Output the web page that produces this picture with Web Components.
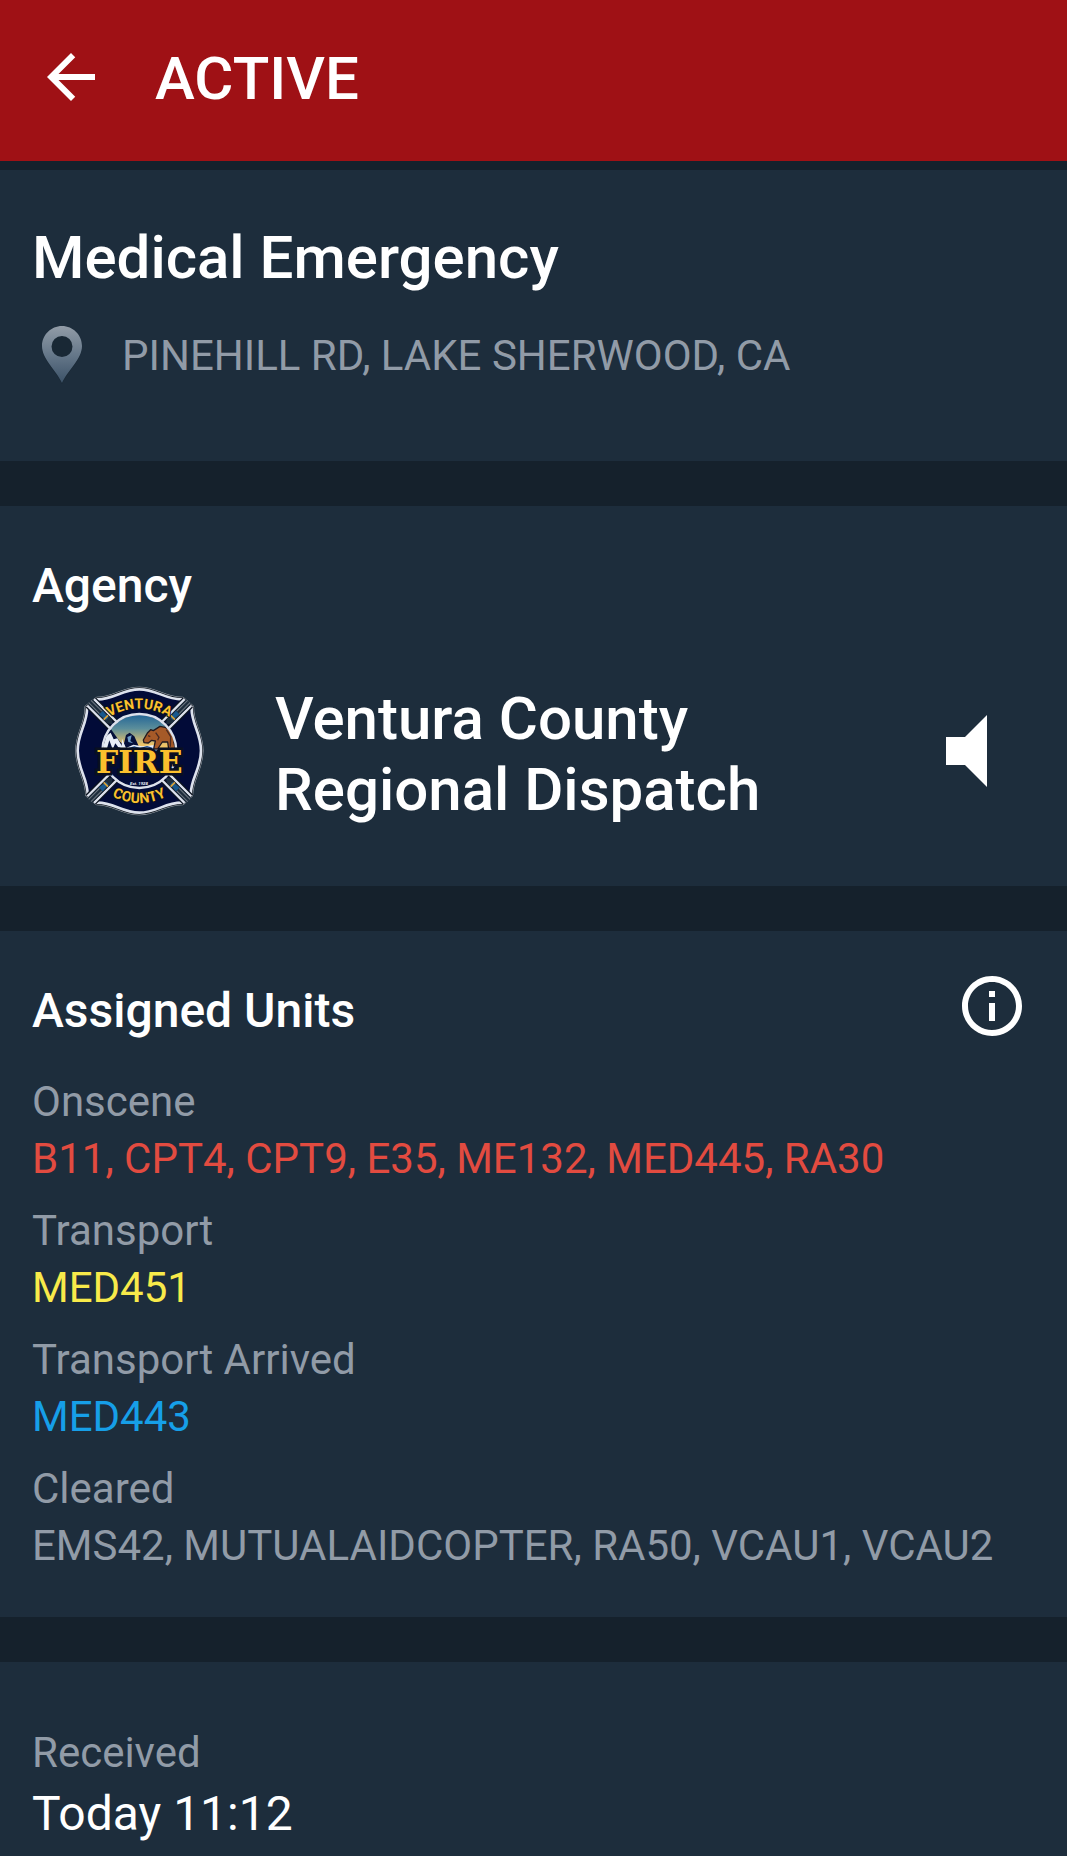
<!DOCTYPE html>
<html lang="en">
<head>
<meta charset="utf-8">
<meta name="viewport" content="width=device-width, initial-scale=1">
<title>Active incident</title>
<style>
  :root {
    --bar: #9f1115;
    --card: #1d2d3c;
    --gap: #15212c;
    --text: #fff;
    --muted: #919ba7;
  }

  body {
    margin: 0;
    background: var(--gap);
    color: var(--text);
    font-family: Roboto, "Liberation Sans", sans-serif;
  }
</style>
</head>
<body>

<incident-page>
  <app-bar slot="bar">ACTIVE</app-bar>

  <info-card>
    <card-title large>Medical Emergency</card-title>
    <incident-address>PINEHILL RD, LAKE SHERWOOD, CA</incident-address>
  </info-card>

  <info-card>
    <card-title>Agency</card-title>
    <agency-row>
      <agency-badge slot="badge"></agency-badge>
      Ventura County Regional Dispatch
    </agency-row>
  </info-card>

  <info-card>
    <card-title info>Assigned Units</card-title>
    <unit-list>
      <unit-group label="Onscene" status="onscene">B11, CPT4, CPT9, E35, ME132, MED445, RA30</unit-group>
      <unit-group label="Transport" status="transport">MED451</unit-group>
      <unit-group label="Transport Arrived" status="arrived">MED443</unit-group>
      <unit-group label="Cleared" status="cleared">EMS42, MUTUALAIDCOPTER, RA50, VCAU1, VCAU2</unit-group>
    </unit-list>
  </info-card>

  <info-card last>
    <unit-group label="Received" status="time">Today 11:12</unit-group>
  </info-card>
</incident-page>

<script>
// every element below only differs in its markup, so the shadow root is set up once
class BaseElement extends HTMLElement {
  constructor() {
    super();
    this.attachShadow({ mode: 'open' }).innerHTML = this.constructor.markup;
  }
}

// page: app bar on top, cards under it
customElements.define('incident-page', class extends BaseElement {
  static markup = `
    <style>
      :host { display: flex; flex-direction: column; min-height: 100vh; }
      main { flex: 1; display: flex; flex-direction: column; gap: 45px; padding-top: 9px; }
    </style>
    <slot name="bar"></slot>
    <main><slot></slot></main>
  `;
});

customElements.define('app-bar', class extends BaseElement {
  static markup = `
    <style>
      :host { display: block; background: var(--bar); }
      header { display: flex; align-items: flex-end; gap: 48px; padding: 41px 35px 48px; }
      button { display: block; padding: 0; border: 0; background: none; color: inherit; }
      svg { display: block; width: 72px; height: 72px; }
      h1 { margin: 0; font-size: 60px; font-weight: 500; line-height: 68px; }
    </style>
    <header>
      <button type="button" aria-label="Back">
        <svg viewBox="0 0 24 24" fill="currentColor"><path d="M20 11H7.83l5.59-5.59L12 4l-8 8 8 8 1.41-1.41L7.83 13H20v-2z"/></svg>
      </button>
      <h1><slot></slot></h1>
    </header>
  `;
});

customElements.define('info-card', class extends BaseElement {
  static markup = `
    <style>
      :host { display: block; padding: 52px 39px 43px 32px; background: var(--card); }
      :host([last]) { flex: 1; padding-top: 62px; padding-bottom: 0; }
    </style>
    <slot></slot>
  `;
});

customElements.define('card-title', class extends BaseElement {
  static markup = `
    <style>
      :host { display: flex; justify-content: space-between; }
      h2 { margin: 0; font-size: 48px; font-weight: 500; line-height: 56px; }
      :host([large]) h2 { font-size: 60px; line-height: 72px; }
      /* the tap area is taller than the title line */
      button { display: none; margin: -13px 0 -3px; padding: 0; border: 0; background: none; color: inherit; }
      :host([info]) button { display: block; }
      svg { display: block; width: 72px; height: 72px; }
    </style>
    <h2><slot></slot></h2>
    <button type="button" aria-label="Unit status info">
      <svg viewBox="0 0 24 24" fill="currentColor"><path d="M11 7h2v2h-2zm0 4h2v6h-2zm1-9C6.48 2 2 6.48 2 12s4.48 10 10 10 10-4.48 10-10S17.52 2 12 2zm0 18c-4.41 0-8-3.59-8-8s3.59-8 8-8 8 3.59 8 8-3.59 8-8 8z"/></svg>
    </button>
  `;
});

customElements.define('incident-address', class extends BaseElement {
  static markup = `
    <style>
      :host { display: flex; align-items: center; gap: 30px; padding: 32px 0; color: var(--muted); font-size: 42px; line-height: 50px; }
      svg { flex: none; width: 60px; height: 60px; }
    </style>
    <svg viewBox="0 0 60 60" aria-hidden="true">
      <defs>
        <linearGradient id="pin" x1="0" y1="0" x2="0" y2="1">
          <stop offset="0" stop-color="#929ca7"/>
          <stop offset=".5" stop-color="#66788a"/>
          <stop offset="1" stop-color="#3c5268"/>
        </linearGradient>
      </defs>
      <path d="M30 2C19 2 10 10 10 21c0 13 14 24 20 37 6-13 20-24 20-37C50 10 41 2 30 2z" fill="#172431" opacity=".6"/>
      <path fill="url(#pin)" fill-rule="evenodd" d="M30 0C19 0 10 9 10 20c0 13 14 24 20 37 6-13 20-24 20-37C50 9 41 0 30 0zm0 10a10.500 10.500 0 1 1 0 21 10.500 10.500 0 0 1 0-21z"/>
    </svg>
    <span><slot></slot></span>
  `;
});

customElements.define('agency-row', class extends BaseElement {
  static markup = `
    <style>
      :host { display: flex; align-items: flex-start; gap: 68px; padding: 69px 0 18px 39px; }
      .name { flex: 1; margin-right: -68px; font-size: 60px; font-weight: 500; line-height: 71px; }
      button { display: grid; place-items: center; width: 124px; height: 136px; padding: 0; border: 0; background: none; color: inherit; }
      svg { width: 41px; height: 72px; }
    </style>
    <slot name="badge"></slot>
    <div class="name"><slot></slot></div>
    <button type="button" aria-label="Listen">
      <svg viewBox="0 0 41 72" fill="currentColor"><path d="M0 22h19L41 0v72L19 50H0z"/></svg>
    </button>
  `;
});

// fire department cross
customElements.define('agency-badge', class extends BaseElement {
  static markup = `
    <style>
      :host { display: block; flex: none; }
      svg { display: block; width: 136px; height: 136px; }
      text { font-family: "Liberation Sans Narrow", Roboto, sans-serif; font-weight: 700; fill: #fbc02d; stroke: #0a1020; paint-order: stroke; text-anchor: middle; }
      .fire { font-family: "DejaVu Serif", serif; }
      .est { fill: #e9edf5; stroke: none; }
    </style>
    <svg viewBox="32 41 408 408" role="img" aria-label="Ventura County Fire">
      <defs>
        <linearGradient id="sky" x1="0" y1="0" x2="0" y2="1">
          <stop offset="0" stop-color="#1f6296"/>
          <stop offset=".2" stop-color="#5b8e9b"/>
          <stop offset=".42" stop-color="#efc467"/>
        </linearGradient>
        <clipPath id="disc"><circle cx="237" cy="245" r="108"/></clipPath>
        <path id="cross" d="M110 90C160 91 185 60 237 60S314 91 366 90L394 114C391 160 422 190 422 244S391 328 391 376L366 400C314 399 289 430 237 430S160 399 110 400L82 376C82 328 52 298 52 244S83 160 80 114Z"/>
        <path id="top" d="M140 147Q237 88 334 147"/>
        <path id="bottom" d="M135 370Q237 432 339 370"/>
        <!-- slot between two arms, with the hose nozzle in it -->
        <g id="slot">
          <path d="M-14-206V-106M14-206V-106" stroke="#0c1420" stroke-width="15"/>
          <path d="M-14-206V-106M14-206V-106" stroke="#dce1ec" stroke-width="7"/>
          <path d="M-10-210H10V-128L0-112-10-128Z" fill="#1d2d3c"/>
          <path d="M-5-210V-164M5-210V-164" stroke="#6d7681" stroke-width="3"/>
          <path d="M-8-163H8L5-136H-5Z" fill="#17588d"/>
          <path d="M-9-142H9" stroke="#d9a33a" stroke-width="5"/>
        </g>
      </defs>

      <use href="#cross" fill="none" stroke="#a9b0b9" stroke-width="15" stroke-linejoin="round"/>
      <use href="#cross" fill="none" stroke="#111821" stroke-width="12" stroke-linejoin="round"/>
      <use href="#cross" fill="#020b38" stroke="#dce1ec" stroke-width="8" stroke-linejoin="round"/>
      <use href="#slot" transform="translate(237 245) rotate(45)"/>
      <use href="#slot" transform="translate(237 245) rotate(135)"/>
      <use href="#slot" transform="translate(237 245) rotate(225)"/>
      <use href="#slot" transform="translate(237 245) rotate(315)"/>

      <g clip-path="url(#disc)">
        <rect x="125" y="133" width="224" height="224" fill="url(#sky)"/>
        <path d="M125 258V205L151 178 179 217 190 226 197 197 208 190 222 201 236 232 350 240V360H125Z" fill="#05103a"/>
        <path d="M126 240L137 201 151 190 160 210 171 207 188 235 180 242 165 222 157 240 147 213 138 244Z" fill="#e8edf6"/>
        <path d="M185 208L197 236 219 226 246 231 282 227 296 238 281 248H183Z" fill="#e8edf6"/>
        <path d="M201 203L214 198 210 215 219 222 204 218Z" fill="#6f9dc8"/>
        <path d="M190 242L222 233 239 238 260 232 276 237" fill="none" stroke="#16468d" stroke-width="4"/>
        <!-- bear -->
        <path d="M249 212L262 190 271 181 279 184 299 171 314 174 329 180 340 196 341 220 345 239H325L322 218 306 218 292 239H280L285 215 274 213 264 221 251 220Z" fill="#a65a28" stroke="#211a20" stroke-width="4" stroke-linejoin="round"/>
        <path d="M286 190L296 204 292 213M318 181L331 202 330 232M263 199L270 202" fill="none" stroke="#4b2b22" stroke-width="4"/>
        <path d="M125 249H350V358H125Z" fill="#020b38"/>
      </g>
      <circle cx="237" cy="245" r="111" fill="none" stroke="#dce1ec" stroke-width="7"/>

      <text font-size="42" stroke-width="6"><textPath href="#top" startOffset="50%">VENTURA</textPath></text>
      <text class="fire" x="237" y="311" font-size="94" stroke-width="15">FIRE</text>
      <text class="est" x="236" y="346" font-size="13" font-style="italic">Est. 1928</text>
      <text font-size="43" stroke-width="6"><textPath href="#bottom" startOffset="50%">COUNTY</textPath></text>
    </svg>
  `;
});

customElements.define('unit-list', class extends BaseElement {
  static markup = `
    <style>
      :host { display: flex; flex-direction: column; gap: 15px; padding-top: 34px; }
    </style>
    <slot></slot>
  `;
});

customElements.define('unit-group', class extends BaseElement {
  static markup = `
    <style>
      :host { display: block; font-size: 42px; line-height: 57px; }
      dl, dd { margin: 0; }
      dt { color: var(--muted); }
      :host([status="onscene"]) dd { color: #e24b40; }
      :host([status="transport"]) dd { color: #f8ea4a; }
      :host([status="arrived"]) dd { color: #169fe8; }
      :host([status="cleared"]) dd { color: var(--muted); }
      :host([status="time"]) dd { font-size: 48px; line-height: 65px; }
    </style>
    <dl>
      <dt></dt>
      <dd><slot></slot></dd>
    </dl>
  `;

  connectedCallback() {
    this.shadowRoot.querySelector('dt').textContent = this.getAttribute('label');
  }
});
</script>
</body>
</html>
